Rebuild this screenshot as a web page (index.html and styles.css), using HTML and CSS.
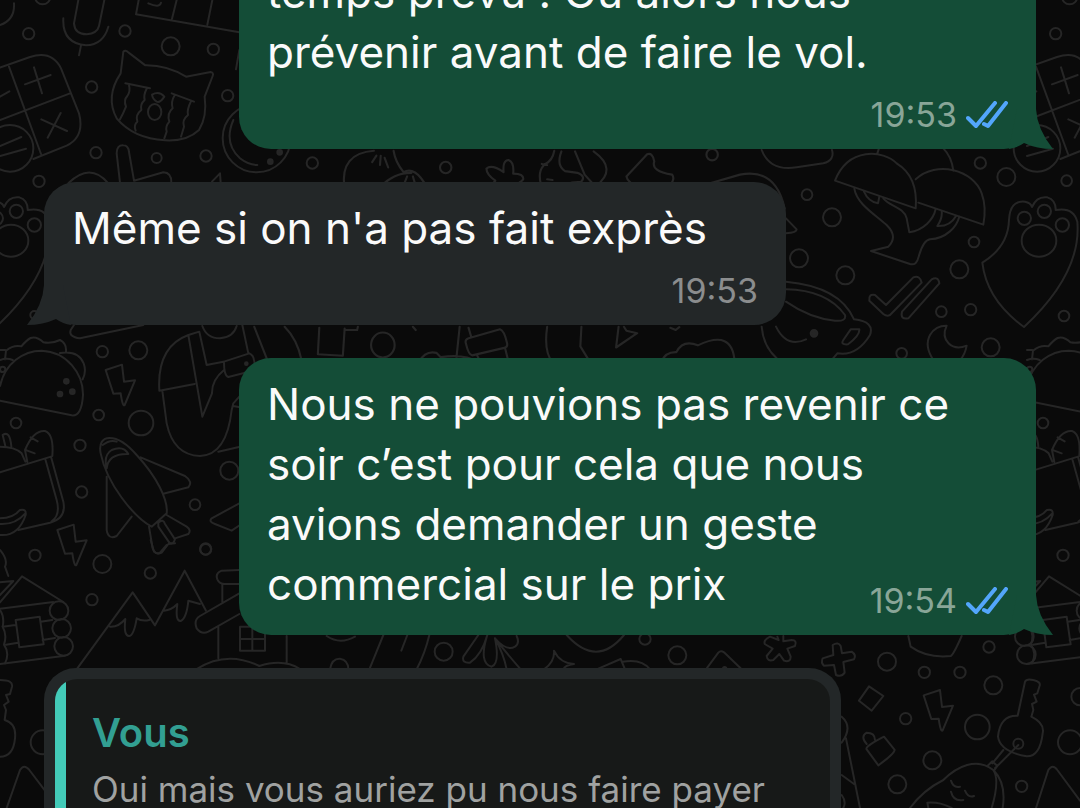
FILE: index.html
```
<!DOCTYPE html>
<html lang="fr">

<head>
    <meta charset="UTF-8">
    <meta name="viewport" content="width=device-width, initial-scale=1.0">
    <title>Discussion</title>
    <link rel="stylesheet" href="styles.css">
</head>

<body>
    <svg class="wallpaper" aria-hidden="true">
        <defs>
            <!-- calculatrice -->
            <g id="calc">
                <path d="M0 203L90 171Q155 150 183 205L237 340Q255 410 200 437L100 477M0 360L210 280M27 200L123 462M75 253L152 225M102 202L126 280M124 358L201 393M182 339L143 413M0 290L28 274M0 438L64 411M0 468L78 446" />
                <circle cx="30" cy="445" r="70" />
            </g>
            <!-- patte -->
            <g id="paw">
                <circle cx="793" cy="475" r="20" />
                <circle cx="853" cy="454" r="20" />
                <circle cx="907" cy="495" r="20" />
                <ellipse cx="837" cy="542" rx="52" ry="48" />
                <path d="M667 608Q745 560 747 480Q750 420 795 425Q812 428 816 441Q830 408 862 412Q888 420 887 450Q940 440 952 485Q965 640 792 801Q680 720 667 608Z" />
            </g>
            <!-- taco -->
            <g id="taco">
                <path d="M0 258C15 190 70 152 125 152C200 155 250 220 249 285Q245 350 215 346L0 302M15 178L18 152Q40 134 64 139Q80 120 92 114Q110 108 130 127Q155 132 180 120Q200 130 198 154M180 159Q235 150 251 190Q260 215 248 238M0 180Q20 172 38 180M0 150L16 150" />
                <g class="dot">
                    <circle cx="199" cy="244" r="7" />
                    <circle cx="180" cy="282" r="7" />
                    <circle cx="217" cy="275" r="7" />
                </g>
                <circle cx="8" cy="208" r="8" />
            </g>
            <!-- sac de courses -->
            <g id="bag">
                <path d="M0 517L153 470L190 605Q200 655 150 668L55 690M136 478L170 600Q182 645 155 664M75 450Q100 390 135 393Q162 402 157 468M75 450L82 486M92 412L113 424M80 451L104 460M0 440Q45 440 65 460L76 485M8 405Q30 390 34 440M8 405L16 438M0 655Q40 655 60 630Q80 625 77 645Q55 710 0 705M0 672Q45 675 76 640" />
            </g>
            <!-- cabane -->
            <g id="cabin">
                <path d="M0 187L66 109L190 186M0 206L160 186M8 260L46 255M122 245L157 240M18 314L54 308M128 300L165 294M0 372L195 347M47 240L119 230L131 313L58 322ZM0 127L40 123L0 165" />
                <circle cx="177" cy="212" r="28" />
                <circle cx="185" cy="265" r="28" />
                <circle cx="191" cy="319" r="28" />
                <path d="M0 210Q14 230 8 260Q22 285 12 314Q30 340 15 370" />
            </g>
            <path id="bolt" d="M317 210L366 194L372 245L405 241L374 315Q368 322 362 280L340 281Z" />
        </defs>

        <g class="lines" transform="scale(.33333)">
            <use href="#calc" />
            <use href="#calc" x="3081" />
            <!-- micro -->
            <path d="M235 0L222 70Q224 102 260 103Q292 100 297 78L313 0M190 55Q186 130 258 136Q310 134 325 80M243 136L237 166" />
            <path d="M416 0L408 43L718 97M530 0L516 56M637 0L622 74M445 10Q480 25 483 8M718 150L708 208M0 75Q45 60 42 10" />
            <!-- chat en larmes -->
            <path d="M362 220L370 155Q376 148 386 158L436 196Q500 195 558 230L632 216Q642 218 638 228L614 290Q622 350 597 390Q560 425 495 421Q400 415 350 355Q315 290 362 220Z" />
            <path d="M376 250L450 265M515 280L582 305M387 256Q392 275 382 288Q370 300 378 320Q370 340 360 358M440 266Q430 285 434 300Q420 312 424 330Q405 345 412 365Q400 375 407 392M524 286Q512 305 518 325Q500 340 508 365Q495 380 500 395L493 415M572 306Q560 330 564 345Q545 360 552 380L543 410" />
            <path d="M456 284Q478 272 493 290Q480 310 470 305Q458 298 456 284Z" />
            <ellipse cx="464" cy="336" rx="20" ry="24" />
            <!-- loupe -->
            <circle cx="770" cy="415" r="102" />
            <path d="M700 360Q670 430 720 475Q745 495 772 495" />
            <g class="dot">
                <circle cx="811" cy="485" r="7" />
                <circle cx="839" cy="457" r="7" />
            </g>
            <path d="M360 548L350 460Q350 435 370 436Q385 436 387 456L402 542L490 517Q515 518 514 548M205 550Q270 485 325 550M636 545L660 520L662 548" />
            <use href="#paw" x="-804" y="180" />
            <circle cx="86" cy="101" r="17" />
            <circle cx="128" cy="-10" r="23" />
            <circle cx="375" cy="93" r="17" />
            <circle cx="512" cy="139" r="27" />
            <circle cx="640" cy="148" r="17" />
            <circle cx="275" cy="261" r="17" />
            <circle cx="683" cy="287" r="17" />
            <circle cx="288" cy="458" r="17" />
            <circle cx="470" cy="474" r="15" />
            <circle cx="618" cy="468" r="17" />
            <circle cx="937" cy="489" r="17" />
            <circle cx="117" cy="544" r="17" />
            <circle cx="3167" cy="101" r="17" />
            <circle cx="3209" cy="-10" r="23" />
        </g>

        <!-- bande entre les deux premiers messages -->
        <g class="lines" transform="translate(240 130) scale(.35714)">
            <path d="M292 160Q280 65 375 58M430 58Q435 90 458 118Q490 100 522 158M395 158Q430 120 480 120M370 90L382 72M392 98L394 72M415 105L405 78M460 150L468 130M490 150L484 130" />
            <path d="M700 158L715 142Q690 125 690 108Q705 95 738 118Q735 85 752 84Q768 90 765 122Q795 122 793 138Q780 155 752 150" />
            <path d="M845 160Q830 115 855 95Q875 85 880 58M900 60Q885 100 910 115L945 120Q970 130 955 145Q915 145 912 160M938 60L965 125L995 158M990 60Q1060 110 995 158M860 138L875 140M845 95L860 98" />
            <path d="M1120 158Q1085 150 1082 130L1140 68Q1155 62 1160 88Q1150 115 1210 125Q1220 140 1200 158M1285 158L1400 125Q1500 105 1525 220" />
            <circle cx="576" cy="105" r="16" />
            <circle cx="1322" cy="69" r="16" />
        </g>

        <!-- champignons, tasse, coches, lune -->
        <g class="lines" transform="translate(760 60) scale(.33333)">
            <path d="M225 362C265 260 370 270 410 310Q475 350 467 445ZM467 358C530 300 640 330 665 400Q680 440 670 494L475 428M352 280L356 268M550 265Q575 290 580 332" />
            <path d="M283 386C290 430 340 460 380 495Q415 530 385 560L333 573L450 612Q470 618 476 590Q490 540 510 538C560 535 590 500 598 470M370 415C390 440 430 440 440 475L448 517C490 510 520 480 527 447M312 395Q325 425 354 430L358 410M545 453Q548 475 532 498Q570 500 588 468" />
            <path d="M5 270Q30 335 110 322L190 310Q225 300 216 270M78 475L110 508Q110 518 78 520" />
            <path d="M78 665Q240 680 282 778Q345 785 330 825Q290 890 232 880Q220 895 205 910M78 688Q200 690 255 765Q260 785 225 782Q150 775 78 725M48 800Q80 865 138 838M272 808L298 808Q300 825 264 853Q240 855 250 840ZM5 800Q10 860 50 895" />
            <circle class="dot" cx="162" cy="820" r="10" />
            <path d="M328 722Q326 700 345 705L378 735L460 652Q480 645 485 668L390 765Q380 770 370 762ZM426 755L515 658Q535 648 538 670L445 775Q420 780 426 755Z" />
            <path d="M520 900C480 840 520 795 560 797C540 840 575 875 620 857Q615 885 600 900" />
            <use href="#paw" />
            <circle cx="141" cy="404" r="16" />
            <circle cx="216" cy="472" r="27" />
            <circle cx="117" cy="595" r="27" />
            <circle cx="256" cy="646" r="27" />
            <circle cx="661" cy="309" r="17" />
            <circle cx="739" cy="351" r="27" />
            <circle cx="920" cy="362" r="16" />
            <circle cx="642" cy="546" r="16" />
            <circle cx="598" cy="628" r="27" />
            <circle cx="544" cy="755" r="16" />
            <circle cx="632" cy="749" r="17" />
            <circle cx="912" cy="768" r="16" />
            <circle cx="692" cy="862" r="27" />
            <circle cx="425" cy="880" r="16" />
        </g>

        <!-- bande sous le message recu -->
        <g class="lines" transform="translate(240 300) scale(.35714)">
            <path d="M40 75L78 172L172 167Q160 110 125 75M222 78L218 152L288 156L293 80M295 84L328 84L330 75M615 75L605 172M500 174Q520 140 550 148L562 160Q630 150 665 174M640 78L648 105M632 120Q630 110 640 107L728 82Q740 85 748 122Q750 132 740 134L650 155Q640 155 632 120M742 134L752 174M664 155L672 172M860 75Q850 145 875 174M956 75L953 130L980 174M1060 75L1053 133L1112 93L1082 86L1075 75M1180 174Q1190 145 1222 146Q1240 110 1282 127Q1380 80 1385 174M1282 174Q1300 160 1325 172M1205 78L1220 84L1230 76M484 75L492 84" />
            <ellipse cx="400" cy="126" rx="33" ry="35" />
        </g>

        <!-- taco, fusee, feutre -->
        <g class="lines" transform="translate(0 300) scale(.33333)">
            <use href="#taco" />
            <use href="#taco" x="3081" />
            <use href="#bag" />
            <use href="#bag" x="3081" />
            <use href="#bolt" />
            <use href="#bolt" x="-145" y="480" />
            <path d="M212 90Q205 110 240 115L430 75M212 90L222 75" />
            <circle cx="103" cy="45" r="12" />
            <path d="M565 105Q470 140 478 272L584 252M565 105L607 350L636 280Q635 240 672 210M565 105L598 95L620 195L670 185M487 272L500 370Q520 465 600 468Q680 465 695 330L700 310L718 290M700 318L720 322M655 455L720 440M607 78Q620 115 660 115Q700 112 710 78M727 75L745 160M672 185L748 160Q760 165 762 180L768 210L685 231Q672 228 672 185Z" />
            <circle class="dot" cx="739" cy="191" r="4" />
            <path d="M302 460C290 400 350 395 410 465C470 530 505 600 500 640L455 680C400 650 320 550 302 460ZM320 505Q325 460 385 462Q370 435 335 450Q310 465 320 505M308 435Q330 418 350 425M422 472L555 528Q580 545 565 562L490 581M320 530L320 690Q325 720 350 708L395 650M447 680L458 745Q465 765 480 758L500 735M500 645L560 680Q575 690 565 702L525 715M475 668Q490 655 495 672L525 718Q520 735 508 728L475 680Z" />
            <path d="M718 610L635 655Q625 665 645 672L695 692L720 675" />
            <circle cx="307" cy="155" r="17" />
            <circle cx="415" cy="151" r="27" />
            <circle cx="296" cy="345" r="16" />
            <circle cx="423" cy="369" r="37" />
            <circle cx="48" cy="369" r="16" />
            <circle cx="240" cy="436" r="17" />
            <circle cx="245" cy="576" r="17" />
            <circle cx="688" cy="512" r="27" />
            <circle cx="585" cy="614" r="16" />
            <circle cx="617" cy="748" r="16" />
            <circle cx="105" cy="766" r="17" />
            <circle cx="3129" cy="369" r="16" />
        </g>

        <!-- cabane, montagnes, maison -->
        <g class="lines" transform="translate(0 540) scale(.33333)">
            <use href="#cabin" />
            <use href="#cabin" x="3081" />
            <path d="M232 385L398 157L465 256L554 92L618 212M330 260Q355 262 376 237Q370 290 388 288Q402 285 410 235Q425 245 448 240M492 212Q515 210 532 192Q525 245 542 243Q560 235 565 182L600 192" />
            <path d="M718 90L665 92Q645 100 652 118Q658 132 675 132L718 132M667 132L667 185M718 160L600 228Q580 240 590 265Q605 285 625 275L718 222M655 262L655 355M860 288L860 370M720 260L795 260L795 332L720 332ZM757 260L757 332M720 297L795 297M590 387Q680 330 778 378Q850 355 900 387" />
            <path d="M0 30Q25 60 15 80L25 108M0 420Q40 420 36 440L30 462L18 465L26 485L12 495L18 510L14 540Q50 550 45 595Q40 650 0 650M20 804L60 690Q72 670 88 690L135 752" />
            <path d="M452 0L462 35Q472 45 485 38L505 12L525 10" />
            <circle cx="307" cy="72" r="27" />
            <circle cx="451" cy="99" r="17" />
            <circle cx="617" cy="27" r="17" />
            <circle cx="276" cy="179" r="17" />
            <circle cx="128" cy="607" r="36" />
        </g>

        <g class="lines" transform="translate(240 600) scale(.33333)">
            <path d="M430 105L388 208M502 105L484 152M568 105Q555 160 530 208M260 108Q300 135 345 110M270 208Q275 175 300 176Q325 180 325 208M715 105L670 170Q665 190 690 188Q725 165 742 105Q715 190 755 200Q780 190 765 115Q800 160 842 208M765 115Q790 160 800 208M765 115Q800 155 825 140Q840 130 830 108M980 105Q1070 205 1152 105M912 208Q945 185 942 152Q960 190 1002 192Q975 195 970 208M1070 208L1142 177L1155 208M1148 185Q1205 175 1230 208M1398 208L1435 158Q1442 150 1452 157L1505 208" />
            <circle cx="611" cy="155" r="27" />
            <circle cx="1215" cy="117" r="17" />
            <circle cx="1312" cy="166" r="27" />
            <circle class="dot" cx="1454" cy="206" r="5" />
        </g>

        <!-- cle, avocat, cadenas -->
        <g class="lines" transform="translate(760 540) scale(.33333)">
            <path d="M52 290L56 300L30 290Q10 300 14 312L38 326L20 348Q22 365 40 360L58 342L72 362Q92 368 92 350L82 326L105 318Q112 300 95 300L70 304L70 288" />
            <path d="M218 315Q235 305 242 318L246 340L275 335Q290 345 282 358L250 366L254 398Q245 412 228 405L222 375L192 377Q182 368 188 355L220 345Z" />
            <path d="M445 288L452 320Q500 355 572 348Q580 345 605 288" />
            <path d="M327 439L370 468L335 512L297 482ZM320 628Q313 620 372 590L404 630Q402 642 355 676ZM320 612Q300 590 320 578Q345 578 345 600" />
            <use href="#bolt" x="174" y="256" />
            <path d="M773 527L795 425Q800 415 820 420Q845 425 838 440L832 460L822 464L830 485L816 492L820 510L814 530Q855 550 848 580Q840 650 800 649Q720 635 714 590Q720 525 773 527ZM730 630L697 670M705 685L775 615M683 677L697 664L712 678L702 692" />
            <circle cx="775" cy="611" r="15" />
            <path d="M450 804Q490 750 550 720C590 680 650 650 700 690Q720 720 695 804M700 690Q740 730 728 804M573 722Q580 745 600 740M615 752Q625 775 642 768M573 755Q580 785 610 780M505 804L502 788Q540 785 575 804" />
            <path d="M245 530Q280 560 245 608M258 595L300 804M245 705L282 732M245 765Q260 785 250 804M828 804L865 690Q878 670 892 690L960 782" />
            <circle cx="909" cy="46" r="17" />
            <circle cx="793" cy="290" r="28" />
            <circle cx="799" cy="344" r="28" />
            <circle cx="381" cy="365" r="27" />
            <circle cx="687" cy="321" r="17" />
            <circle cx="493" cy="397" r="17" />
            <circle cx="600" cy="397" r="17" />
            <circle cx="700" cy="436" r="27" />
            <circle cx="437" cy="536" r="17" />
            <circle cx="652" cy="561" r="37" />
            <circle cx="517" cy="661" r="27" />
            <circle cx="412" cy="733" r="27" />
            <circle cx="785" cy="739" r="17" />
            <circle cx="930" cy="607" r="36" />
            <circle cx="960" cy="470" r="26" />
        </g>
    </svg>

    <main class="chat">
        <article class="bubble sent">
            <p>temps prévu ! Ou alors nous<br>prévenir avant de faire le vol.</p>
            <footer class="meta">
                <time>19:53</time>
                <svg class="ticks" viewBox="0 0 42 28" role="img" aria-label="Lu">
                    <path d="M2 17L10 25L29 2M18 23L22 25L40 2" />
                </svg>
            </footer>
            <svg class="tail" viewBox="0 0 36 40" aria-hidden="true">
                <path d="M0 0H19Q20 20 36 40Q20 40 7 34Q0 39 -8 40Z" />
            </svg>
        </article>

        <article class="bubble received">
            <p>Même si on n'a pas fait exprès</p>
            <footer class="meta">
                <time>19:53</time>
            </footer>
            <svg class="tail" viewBox="0 0 36 40" aria-hidden="true">
                <path d="M0 0H19Q20 20 36 40Q20 40 7 34Q0 39 -8 40Z" />
            </svg>
        </article>

        <article class="bubble sent">
            <p>Nous ne pouvions pas revenir ce<br>soir c’est pour cela que nous<br>avions demander un geste<br>commercial sur le prix</p>
            <footer class="meta meta-inline">
                <time>19:54</time>
                <svg class="ticks" viewBox="0 0 42 28" role="img" aria-label="Lu">
                    <path d="M2 17L10 25L29 2M18 23L22 25L40 2" />
                </svg>
            </footer>
            <svg class="tail" viewBox="0 0 36 40" aria-hidden="true">
                <path d="M0 0H19Q20 20 36 40Q20 40 7 34Q0 39 -8 40Z" />
            </svg>
        </article>

        <article class="bubble reply">
            <blockquote class="quote">
                <strong>Vous</strong>
                <p>Oui mais vous auriez pu nous faire payer</p>
            </blockquote>
        </article>
    </main>
</body>

</html>
```
FILE: styles.css
```
* {
    box-sizing: border-box;
    margin: 0;
    padding: 0;
}

body {
    position: relative;
    height: 100vh;
    overflow: hidden;
    background-color: #0a0a0a;
    color: #fafafa;
    font-family: Inter, "Liberation Sans", sans-serif;
}

.wallpaper {
    position: absolute;
    top: 0;
    left: 0;
    width: 100%;
    height: 100%;
}

.lines {
    fill: none;
    stroke: #262626;
    stroke-width: 6;
    stroke-linecap: round;
    stroke-linejoin: round;
}

.dot {
    fill: #262626;
}

.chat {
    position: relative;
    display: flex;
    flex-direction: column;
    gap: 33px;
    /* la discussion est defilee, le premier message depasse en haut */
    margin-top: -54px;
    padding: 0 44px;
}

.bubble {
    position: relative;
    padding: 16px 28px;
    border-radius: 32px;
    font-size: 44px;
    line-height: 60px;
}

.bubble p {
    white-space: nowrap;
}

.sent {
    margin-left: 195px;
    background-color: #144d37;
}

.received {
    margin-right: 250px;
    background-color: #232728;
}

.meta {
    display: flex;
    justify-content: flex-end;
    align-items: center;
    gap: 9px;
    margin-top: 15px;
    font-size: 34px;
    line-height: 36px;
    color: #89a698;
}

.received .meta {
    color: #8b8d8e;
}

.meta-inline {
    margin-top: -31px;
}

.ticks {
    width: 42px;
    height: 28px;
    fill: none;
    stroke: #53a6fb;
    stroke-width: 4;
    stroke-linecap: round;
    stroke-linejoin: round;
}

.tail {
    position: absolute;
    right: -17px;
    bottom: 0;
    width: 36px;
    height: 40px;
    overflow: visible;
    fill: #144d37;
}

.received .tail {
    right: auto;
    left: -17px;
    transform: scaleX(-1);
    fill: #232728;
}

.reply {
    margin-right: 195px;
    padding: 11px;
    background-color: #232728;
}

.quote {
    padding: 26px 26px 28px 37px;
    border-radius: 22px;
    background: linear-gradient(to right, #43cbb9 11px, #171918 11px);
    color: #a0a2a1;
    font-size: 35px;
    line-height: 56px;
}

.quote strong {
    display: block;
    color: #329f92;
    font-size: 40px;
    font-weight: 600;
}
```
